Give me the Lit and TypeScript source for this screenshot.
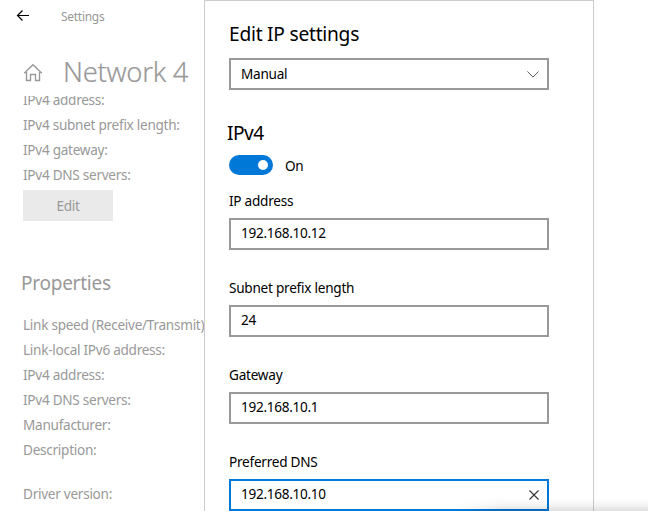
import { LitElement, html, css } from "lit";
import { customElement, property } from "lit/decorators.js";
import { classMap } from "lit/directives/class-map.js";

@customElement("ip-field")
class IpField extends LitElement {
  @property() label = "";
  @property() value = "";
  @property({ type: Boolean }) active = false;

  static styles = css`
    :host { display: block; height: 87px; }
    .label { height: 26px; line-height: 18px; white-space: nowrap; letter-spacing: -0.25px; }
    .box {
      box-sizing: border-box; height: 32px; border: 2px solid #999;
      display: flex; align-items: center; justify-content: space-between;
      padding: 0 8px 2px 10px; background: #fff;
    }
    .box.active { border-color: #0078d7; }
    .value { letter-spacing: -0.3px; }
    svg { display: block; margin-top: 2px; }
  `;

  render() {
    return html`
      <div class="label">${this.label}</div>
      <div class=${classMap({ box: true, active: this.active })}>
        <span class="value">${this.value}</span>
        ${this.active
          ? html`<svg width="10" height="10" viewBox="0 0 10 10">
              <path d="M.5 .5L9.5 9.5M9.5 .5L.5 9.5" stroke="#333" stroke-width="1.1" fill="none" />
            </svg>`
          : null}
      </div>`;
  }
}

@customElement("app-root")
class AppRoot extends LitElement {
  static styles = css`
    :host {
      display: block; position: relative; width: 648px; height: 511px; overflow: hidden;
      background: #fff; color: #000;
      font: 13.6px/18px "Noto Sans", "Open Sans", sans-serif;
      letter-spacing: -0.28px;
    }
    .window { display: grid; grid-template-columns: 204px 390px 1fr; height: 511px; }
    .page { color: #999; white-space: nowrap; min-width: 0; }
    .bar { display: flex; height: 33px; align-items: center; }
    .back { margin: -2px 0 0 16px; }
    .app { font-size: 12px; margin-left: 31px; letter-spacing: -0.28px; }
    .heading { display: flex; height: 63px; }
    .home { margin: 30px 0 0 23px; }
    .name { font-size: 27.4px; line-height: 40px; margin: 19px 0 0 20px; font-weight: 300; letter-spacing: -0.3px; -webkit-text-stroke: 0.2px #999; }
    .details { height: 94px; overflow: hidden; padding-left: 23px; }
    .details .row:first-child { margin-top: -9px; }
    .row { height: 25px; line-height: 25px; }
    .edit {
      width: 90px; height: 31px; margin-left: 23px; background: #eaeaea;
      line-height: 31px; text-align: center;
    }
    .section { font-size: 19px; line-height: 28px; margin: 48px 0 0 21px; letter-spacing: -0.25px; }
    .props { padding: 15px 0 0 23px; }
    .gap { margin-top: 19px; }
    .dialog { box-sizing: border-box; border: 1px solid #ccc; border-bottom: 0; background: #fff; padding: 0 44px 0 24px; height: 511px; overflow: hidden; }
    .title { font-size: 19.2px; line-height: 28px; height: 38px; padding-top: 19px; letter-spacing: -0.25px; }
    .select {
      box-sizing: border-box; height: 32px; border: 2px solid #999; display: flex;
      align-items: center; justify-content: space-between; padding: 0 8px 0 10px;
    }
    .sub { font-size: 19.2px; line-height: 28px; margin: 29px 0 0 -2px; height: 36px; letter-spacing: -0.5px; }
    .switch { display: flex; height: 37px; }
    .track { width: 44px; height: 20px; border-radius: 10px; background: #0078d7; box-sizing: border-box; padding: 5px 0 0 29px; }
    .knob { width: 10px; height: 10px; border-radius: 50%; background: #fff; }
    .on { margin: 2px 0 0 12px; }
    .shade {
      position: absolute; right: 0; bottom: 0; width: 190px; height: 13px;
      background: linear-gradient(rgba(0,0,0,0), rgba(0,0,0,.04) 50%, rgba(0,0,0,.12));
      mask-image: linear-gradient(90deg, transparent, #000 45px);
      pointer-events: none;
    }
    svg { display: block; flex: none; }
  `;

  details = ["IPv4 address:", "IPv4 subnet prefix length:", "IPv4 gateway:", "IPv4 DNS servers:"];
  props = ["Link speed (Receive/Transmit)", "Link-local IPv6 address:", "IPv4 address:", "IPv4 DNS servers:", "Manufacturer:", "Description:"];

  render() {
    return html`
      <div class="window">
        <div class="page">
          <div class="bar">
            <svg class="back" width="14" height="12" viewBox="0 0 14 12">
              <path d="M13 5.5H1.5M6.5 .5L1.5 5.5L6.5 10.5" stroke="#000" stroke-width="1.2" fill="none" />
            </svg>
            <span class="app">Settings</span>
          </div>
          <div class="heading">
            <svg class="home" width="20" height="19" viewBox="0 0 20 19">
              <path d="M1.2 10.3L10 1.7L18.8 10.3M3.5 9V17.5H7.5V11.5H12.5V17.5H16.5V9" stroke="#999" stroke-width="1.4" fill="none" />
            </svg>
            <span class="name">Network 4</span>
          </div>
          <div class="details">${this.details.map((t) => html`<div class="row">${t}</div>`)}</div>
          <div class="edit">Edit</div>
          <div class="section">Properties</div>
          <div class="props">
            ${this.props.map((t) => html`<div class="row">${t}</div>`)}
            <div class="row gap">Driver version:</div>
          </div>
        </div>
        <div class="dialog">
          <div class="title">Edit IP settings</div>
          <div class="select">
            <span>Manual</span>
            <svg width="12" height="7" viewBox="0 0 12 7">
              <path d="M.4 .5L6 6.1L11.6 .5" stroke="#555" stroke-width="1" fill="none" />
            </svg>
          </div>
          <div class="sub">IPv4</div>
          <div class="switch">
            <div class="track"><div class="knob"></div></div>
            <span class="on">On</span>
          </div>
          <ip-field label="IP address" value="192.168.10.12"></ip-field>
          <ip-field label="Subnet prefix length" value="24"></ip-field>
          <ip-field label="Gateway" value="192.168.10.1"></ip-field>
          <ip-field label="Preferred DNS" value="192.168.10.10" active></ip-field>
        </div>
      </div>
      <div class="shade"></div>`;
  }
}
